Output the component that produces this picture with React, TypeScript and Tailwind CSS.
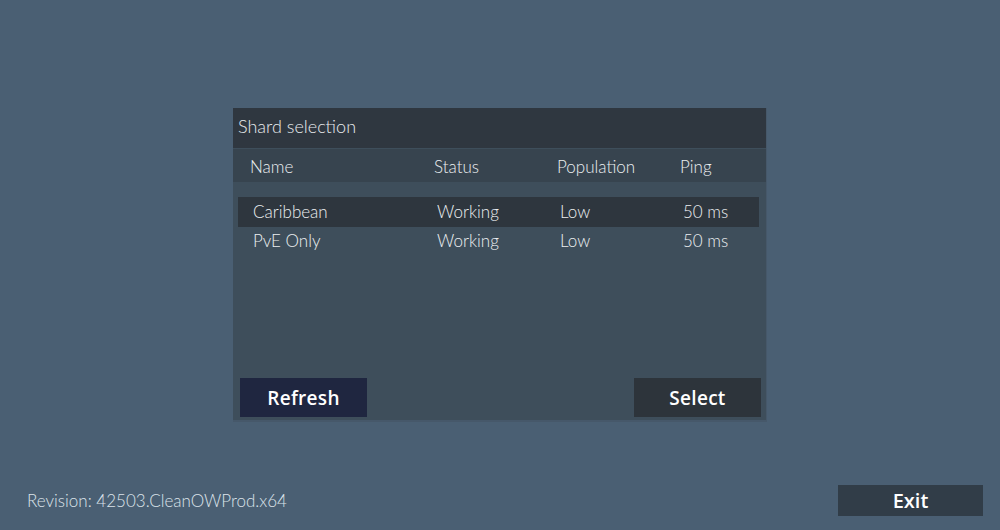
import React from 'react';

type Shard = { name: string; status: string; population: string; ping: string };

const shards: Shard[] = [
  { name: 'Caribbean', status: 'Working', population: 'Low', ping: '50 ms' },
  { name: 'PvE Only', status: 'Working', population: 'Low', ping: '50 ms' },
];

const thin = { fontFamily: 'Lato, "DejaVu Sans", sans-serif' };
const bold = { fontFamily: '"Open Sans", "Liberation Sans", sans-serif' };

export default function App() {
  const selected = 0;

  return (
    <div className="h-[530px] w-full bg-[#4a5f73] flex flex-col overflow-hidden" style={thin}>
      {/* shard panel */}
      <div className="mt-[108px] mx-auto w-[534px] h-[314px] bg-[#3e4e5b] flex flex-col border-b-2 border-r border-[#46586a]">
        <div className="h-[40px] bg-[#2f3740] flex items-center pl-[5px] pb-[4px] text-[18px] font-light text-[#e8ebee]">
          Shard selection
        </div>
        <div className="mt-px h-[33px] bg-[#37444f] grid grid-cols-[184px_123px_123px_1fr] items-center pl-[17px] pt-[2px] text-[17px] font-light text-[#eceff1]">
          <span>Name</span>
          <span>Status</span>
          <span>Population</span>
          <span>Ping</span>
        </div>

        <div className="mt-[15px] mx-[5px] mr-[7px] flex flex-col">
          {shards.map((s, i) => (
            <div
              key={s.name}
              className={`grid grid-cols-[184px_123px_123px_1fr] items-center pl-[15px] text-[17px] font-light text-[#eceff1] ${
                i === 0 ? 'h-[30px]' : 'h-[28px]'
              } ${i === selected ? 'bg-[#2e363e]' : ''}`}
            >
              <span>{s.name}</span>
              <span>{s.status}</span>
              <span>{s.population}</span>
              <span>{s.ping}</span>
            </div>
          ))}
        </div>

        <div className="mt-auto flex justify-between pl-[7px] pr-[5px] pb-[3px]">
          <button
            className="w-[127px] h-[39px] bg-[#1f2640] text-white text-[19px] font-semibold tracking-[0.3px] pt-px"
            style={bold}
          >
            Refresh
          </button>
          <button
            className="w-[127px] h-[39px] bg-[#2d343b] text-white text-[19px] font-semibold tracking-[0.3px] pt-px"
            style={bold}
          >
            Select
          </button>
        </div>
      </div>

      <div className="mt-auto flex items-center justify-between pl-[27px] pr-[17px] pb-[14px]">
        <span className="text-[17px] font-light text-[#dce3ea]">Revision: 42503.CleanOWProd.x64</span>
        <button
          className="w-[145px] h-[31px] bg-[#313d48] text-white text-[20px] font-semibold"
          style={bold}
        >
          Exit
        </button>
      </div>
    </div>
  );
}
